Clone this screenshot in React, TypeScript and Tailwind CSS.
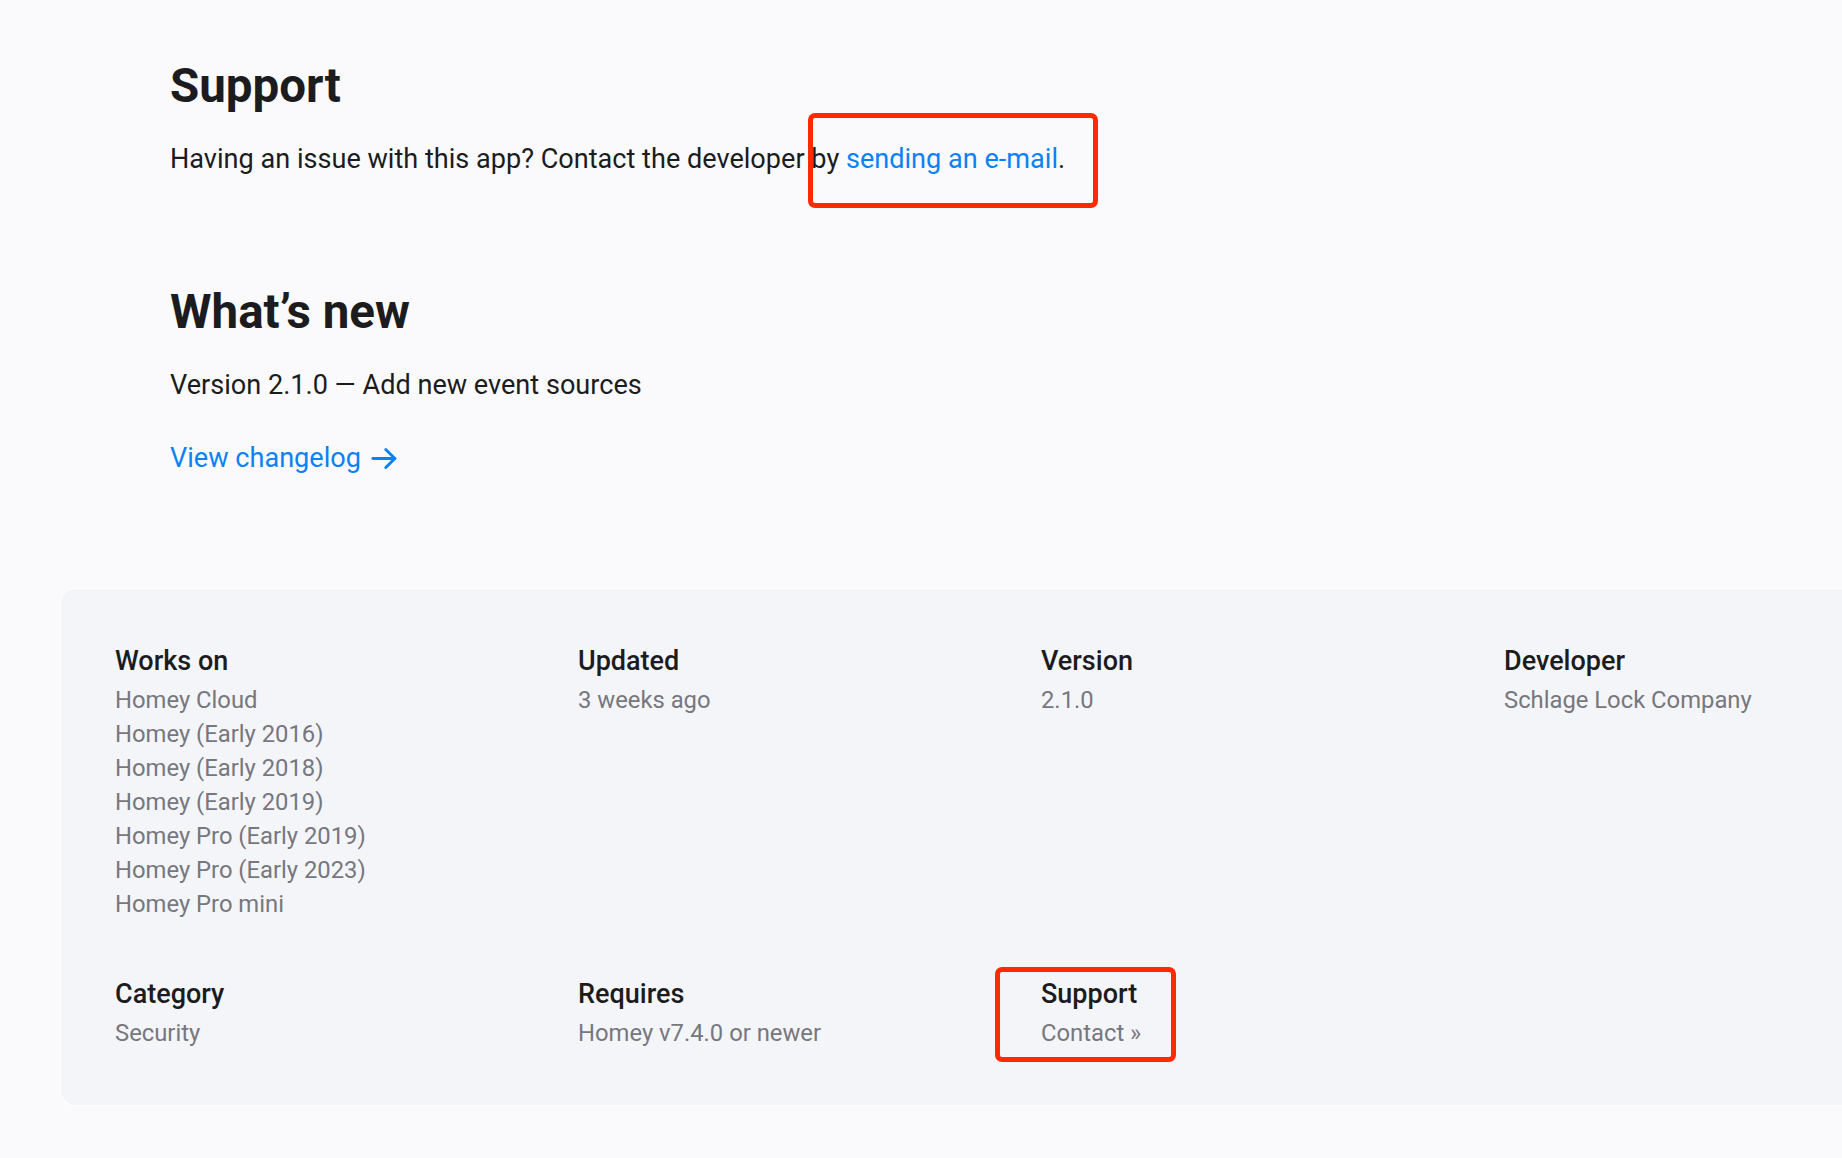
import React from 'react';

const dark = 'text-[#1c1c1e]';
const gray = 'text-[#77777e]';

type Fact = { title: string; values: string[] };

const facts: Fact[] = [
  {
    title: 'Works on',
    values: [
      'Homey Cloud',
      'Homey (Early 2016)',
      'Homey (Early 2018)',
      'Homey (Early 2019)',
      'Homey Pro (Early 2019)',
      'Homey Pro (Early 2023)',
      'Homey Pro mini',
    ],
  },
  { title: 'Updated', values: ['3 weeks ago'] },
  { title: 'Version', values: ['2.1.0'] },
  { title: 'Developer', values: ['Schlage Lock Company'] },
  { title: 'Category', values: ['Security'] },
  { title: 'Requires', values: ['Homey v7.4.0 or newer'] },
  { title: 'Support', values: ['Contact »'] },
];

function ArrowRight() {
  return (
    <svg
      width="31"
      height="31"
      viewBox="0 0 24 24"
      fill="none"
      stroke="currentColor"
      strokeWidth="2.3"
      strokeLinecap="round"
      strokeLinejoin="round"
      className="inline-block"
    >
      <path d="M3 12h17" />
      <path d="M13 5l7 7-7 7" />
    </svg>
  );
}

function Highlight({ className }: { className: string }) {
  return (
    <div
      className={`pointer-events-none absolute rounded-[7px] border-[5px] border-[#ff2a00] ${className}`}
    />
  );
}

export default function App() {
  return (
    <div
      className="relative min-h-screen w-full overflow-hidden bg-[#fafafc]"
      style={{ fontFamily: 'Roboto, "Noto Sans", sans-serif' }}
    >
      <main className="pl-[170px] pt-[58px]">
        <section>
          <h2 className={`text-[47.5px] font-bold leading-[56px] ${dark}`}>Support</h2>
          <p className={`mt-[25px] text-[27.1px] leading-[40px] ${dark}`}>
            Having an issue with this app? Contact the developer by{' '}
            <a className="text-[#0b82f4]" href="#">
              sending an e-mail
            </a>
            .
          </p>
        </section>

        <section className="mt-[105px]">
          <h2 className={`text-[47.5px] font-bold leading-[56px] ${dark}`}>What’s new</h2>
          <p className={`mt-[25px] text-[27.1px] leading-[40px] ${dark}`}>
            Version 2.1.0 — Add new event sources
          </p>
          <a
            href="#"
            className="mt-[33px] flex items-center gap-[8px] text-[27.1px] leading-[40px] text-[#0b82f4]"
          >
            View changelog
            <ArrowRight />
          </a>
        </section>
      </main>

      <div className="ml-[61px] mt-[111px] w-[1900px] rounded-[14px] bg-[#f4f5f9] pb-[55px] pl-[54px] pt-[55px] shadow-[0_0_0_1px_rgba(255,255,255,0.9)]">
        <div className="grid grid-cols-[repeat(4,463px)] gap-y-[56px]">
          {facts.map((fact) => (
            <div key={fact.title}>
              <h3 className={`mb-[5px] text-[27px] font-medium leading-[34px] ${dark}`}>
                {fact.title}
              </h3>
              {fact.values.map((value) => (
                <div key={value} className={`text-[23.8px] leading-[34px] ${gray}`}>
                  {value}
                </div>
              ))}
            </div>
          ))}
        </div>
      </div>
      <div className="h-[54px]" />

      <Highlight className="left-[808px] top-[113px] h-[95px] w-[290px]" />
      <Highlight className="left-[995px] top-[967px] h-[95px] w-[181px]" />
    </div>
  );
}
